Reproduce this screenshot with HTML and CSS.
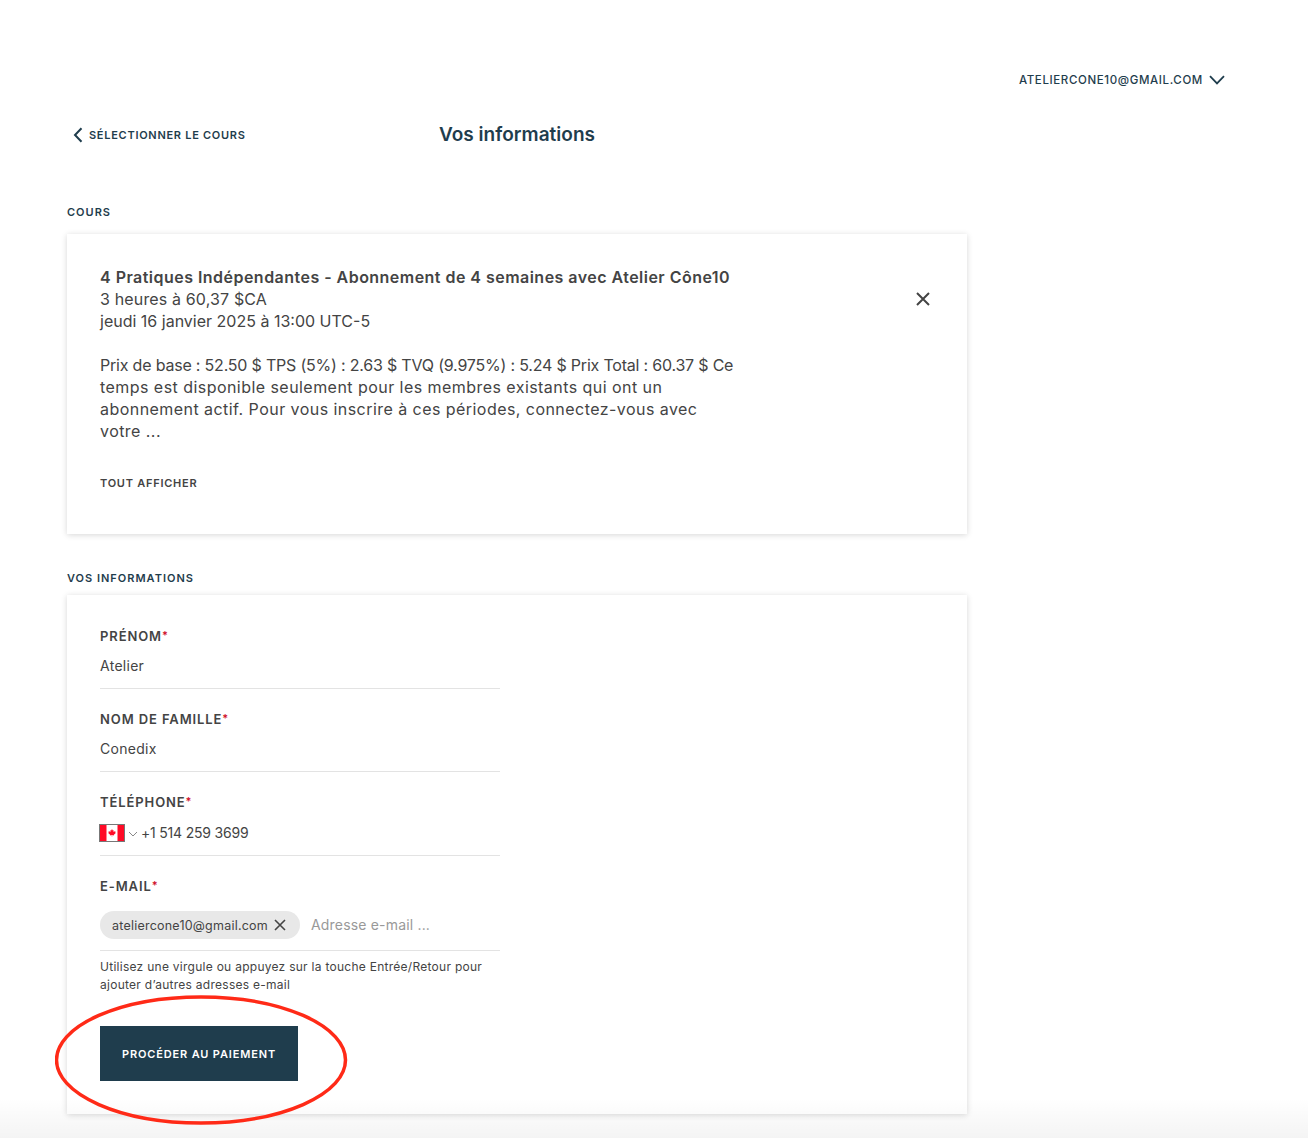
FILE: index.html
```html
<!DOCTYPE html>
<html lang="fr">
<head>
<meta charset="utf-8">
<title>Vos informations</title>
<link rel="stylesheet" href="styles.css">
</head>
<body>
<div class="page">
  <header class="topbar">
    <span class="account">ATELIERCONE10@GMAIL.COM</span>
    <svg class="account-chevron" width="16" height="10" viewBox="0 0 16 10"><path d="M1 1.2 8 8.4 15 1.2" fill="none" stroke="#1f3d4d" stroke-width="1.8"/></svg>
  </header>
  <main class="content">
    <div class="nav-row">
      <a class="back">
        <svg class="back-icon" width="10" height="16" viewBox="0 0 10 16"><path d="M8.5 1.2 2 8l6.5 6.8" fill="none" stroke="#1f3d4d" stroke-width="2"/></svg>
        <span>SÉLECTIONNER LE COURS</span>
      </a>
      <h1 class="title">Vos informations</h1>
    </div>

    <h2 class="section section-first">COURS</h2>
    <section class="card course">
      <div class="course-text">
        <p class="course-name">4 Pratiques Indépendantes - Abonnement de 4 semaines avec Atelier Cône10</p>
        <p class="course-price">3 heures à 60,37 $CA</p>
        <p class="course-date">jeudi 16 janvier 2025 à 13:00 UTC-5</p>
        <p class="course-desc"><span class="desc-digits">Prix de base : 52.50 $ TPS (5%) : 2.63 $ TVQ (9.975%) : 5.24 $ Prix Total : 60.37 $ Ce</span><br>temps est disponible seulement pour les membres existants qui ont un<br>abonnement actif. Pour vous inscrire à ces périodes, connectez-vous avec<br>votre ...</p>
        <a class="show-all">TOUT AFFICHER</a>
      </div>
      <svg class="course-close" width="14" height="14" viewBox="0 0 14 14"><path d="M1 1l12 12M13 1 1 13" fill="none" stroke="#444" stroke-width="2"/></svg>
    </section>

    <h2 class="section section-second">VOS INFORMATIONS</h2>
    <section class="card form">
      <div class="field field-first">
        <div class="label">PRÉNOM<span class="req">*</span></div>
        <div class="value">Atelier</div>
      </div>
      <div class="field">
        <div class="label">NOM DE FAMILLE<span class="req">*</span></div>
        <div class="value">Conedix</div>
      </div>
      <div class="field field-phone">
        <div class="label">TÉLÉPHONE<span class="req">*</span></div>
        <div class="value phone">
          <svg class="flag" width="26" height="18" viewBox="0 0 26 18">
            <rect x="0.5" y="0.5" width="25" height="17" fill="#fff" stroke="#777"/>
            <rect x="1" y="1" width="6.5" height="16" fill="#ff0a26"/>
            <rect x="18.5" y="1" width="6.5" height="16" fill="#ff0a26"/>
            <path d="M13 5l.8 1.5.8-.4-.3 1.8 1-.9.3.8 1.1-.2-.4 1.2.5.3-1.9 1.6.2.7-1.9-.3v1.6h-.4v-1.6l-1.9.3.2-.7-1.9-1.6.5-.3-.4-1.2 1.1.2.3-.8 1 .9-.3-1.8.8.4z" fill="#ff0a26"/>
          </svg>
          <svg class="flag-chevron" width="10" height="6" viewBox="0 0 10 6"><path d="M1 1l4 4 4-4" fill="none" stroke="#888" stroke-width="1"/></svg>
          <span class="phone-number">+1 514 259 3699</span>
        </div>
      </div>
      <div class="field field-email">
        <div class="label">E-MAIL<span class="req">*</span></div>
        <div class="email-row">
          <span class="chip">
            <span>ateliercone10@gmail.com</span>
            <svg class="chip-x" width="12" height="12" viewBox="0 0 12 12"><path d="M1 1l10 10M11 1 1 11" fill="none" stroke="#444" stroke-width="1.6"/></svg>
          </span>
          <span class="placeholder">Adresse e-mail ...</span>
        </div>
      </div>
      <p class="help">Utilisez une virgule ou appuyez sur la touche Entrée/Retour pour<br>ajouter d’autres adresses e-mail</p>
      <button class="submit">PROCÉDER AU PAIEMENT</button>
    </section>
  </main>
  <div class="fade"></div>
  <svg class="annotation" width="300" height="136" viewBox="0 0 300 136"><ellipse cx="146" cy="68" rx="144.5" ry="63" fill="none" stroke="#ff2a17" stroke-width="3.5"/></svg>
</div>
</body>
</html>
```
FILE: styles.css
```css
* { box-sizing: border-box; }
html, body { margin: 0; padding: 0; background: #fff; }
body { font-family: Inter, "Liberation Sans", sans-serif; color: #444; }
p, h1, h2 { margin: 0; }
.page { position: relative; height: 1138px; overflow: hidden; }

.topbar { display: flex; justify-content: flex-end; align-items: center; gap: 6px; height: 20px; margin-top: 70px; padding-right: 83px; }
.account { font-size: 11.5px; font-weight: 500; letter-spacing: 0.63px; color: #1f3d4d; }

.content { width: 900px; margin-left: 67px; }
.nav-row { position: relative; display: flex; align-items: center; justify-content: center; height: 30px; margin-top: 30px; }
.back { position: absolute; left: 6px; top: 7px; display: flex; align-items: center; gap: 6px; font-size: 11px; font-weight: 600; letter-spacing: 0.72px; color: #1f3d4d; }
.title { font-size: 19px; font-weight: 600; color: #1f3d4d; line-height: 30px; letter-spacing: 0.03px; }

.section { font-size: 11px; font-weight: 600; letter-spacing: 1px; color: #1f3d4d; line-height: 16px; }
.section-first { margin-top: 54px; }
.section-second { margin-top: 36px; }

.card { background: #fff; box-shadow: 0 1px 6px rgba(0,0,0,0.16); }
.course { display: flex; justify-content: space-between; height: 300px; margin-top: 14px; padding: 32px 37px 0 33px; }
.course-text { width: 700px; font-size: 16px; line-height: 22px; letter-spacing: 0.45px; }
.course-name { font-weight: 600; letter-spacing: 0.47px; }
.course-price { letter-spacing: 0.15px; }
.course-date { letter-spacing: 0; }
.desc-digits { letter-spacing: -0.2px; }
.course-desc { margin-top: 22px; }
.show-all { display: block; margin-top: 33px; font-size: 11px; font-weight: 600; letter-spacing: 0.75px; line-height: 16px; }
.course-close { margin-top: 26px; }

.form { height: 519px; margin-top: 9px; padding: 29px 33px 0; }
.field { width: 400px; height: 83px; padding-top: 18px; border-bottom: 1px solid #e3e3e3; }
.field-first { height: 65px; padding-top: 0; }
.field-phone { height: 84px; }
.field-email { height: 95px; }
.label { font-size: 13px; font-weight: 600; letter-spacing: 0.9px; line-height: 22px; height: 22px; }
.req { color: #d0112b; font-size: 11px; vertical-align: 2px; }
.value { font-size: 14px; line-height: 20px; letter-spacing: 0.28px; margin-top: 10px; color: #444; }
.phone { display: flex; align-items: center; margin-top: 11px; margin-left: -1px; }
.phone-number { letter-spacing: -0.2px; }
.flag-chevron { margin: 2px 3px 0 3px; }
.email-row { display: flex; align-items: center; gap: 11px; margin-top: 15px; }
.chip { display: flex; align-items: center; gap: 6px; height: 28px; padding: 0 14px 0 12px; border-radius: 14px; background: #e8e8e8; font-size: 12.5px; letter-spacing: 0.22px; }
.placeholder { font-size: 14px; letter-spacing: 0.18px; color: #999; line-height: 18px; }
.help { font-size: 12px; line-height: 18px; letter-spacing: 0.27px; margin-top: 7px; color: #444; }
.submit { display: block; width: 198px; height: 55px; margin-top: 32px; border: 0; border-radius: 0; padding: 0; background: #1f3d4d; color: #fff; font-family: inherit; font-size: 11px; font-weight: 600; letter-spacing: 0.85px; }

.fade { position: absolute; left: 0; right: 0; bottom: 0; height: 40px; background: linear-gradient(to bottom, rgba(0,0,0,0), rgba(0,0,0,0.045)); pointer-events: none; }
.annotation { position: absolute; left: 55px; top: 992px; }
```
